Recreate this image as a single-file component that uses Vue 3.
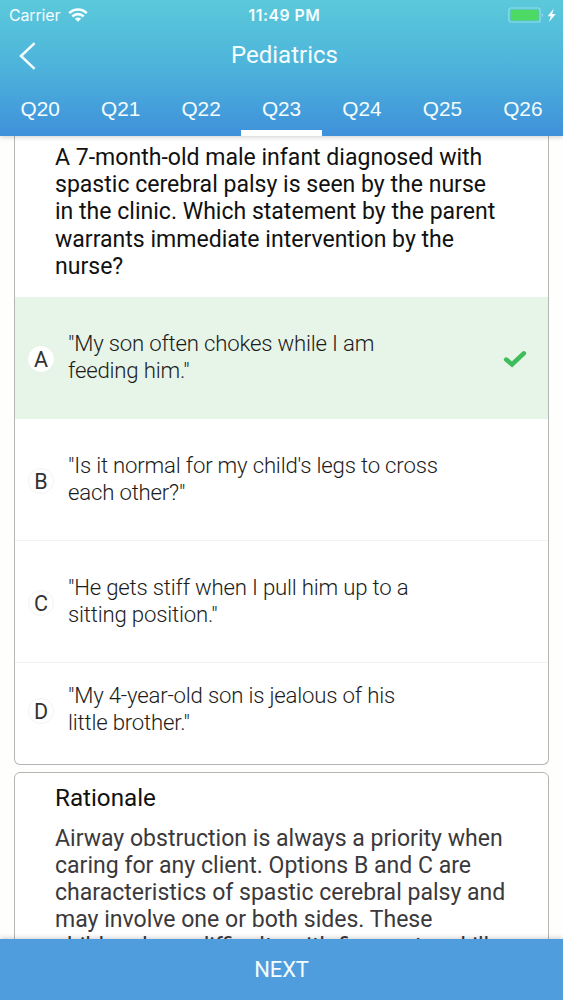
<script setup>
const tabs = ['Q20', 'Q21', 'Q22', 'Q23', 'Q24', 'Q25', 'Q26']
const active = 'Q23'
const question = [
  'A 7-month-old male infant diagnosed with',
  'spastic cerebral palsy is seen by the nurse',
  'in the clinic. Which statement by the parent',
  'warrants immediate intervention by the',
  'nurse?',
]
const answers = [
  { key: 'A', lines: ['"My son often chokes while I am', 'feeding him."'], correct: true },
  { key: 'B', lines: ['"Is it normal for my child\'s legs to cross', 'each other?"'] },
  { key: 'C', lines: ['"He gets stiff when I pull him up to a', 'sitting position."'] },
  { key: 'D', lines: ['"My 4-year-old son is jealous of his', 'little brother."'] },
]
const rationale = [
  'Airway obstruction is always a priority when',
  'caring for any client. Options B and C are',
  'characteristics of spastic cerebral palsy and',
  'may involve one or both sides. These',
  'children have difficulty with fine motor skills',
]
</script>

<template>
  <div class="screen">
    <header class="header">
      <div class="status">
        <div class="carrier">
          <span>Carrier</span>
          <svg class="wifi" viewBox="0 0 20 14" width="20" height="14">
            <path d="M1.2 5.2C6.2.2 13.8.2 18.8 5.2" />
            <path d="M4.3 8.5c3.3-3.2 8.1-3.2 11.4 0" />
            <path class="dot" d="M6.8 10.7c1.8-1.6 4.6-1.6 6.4 0L10 13.8z" />
          </svg>
        </div>
        <span class="clock">11:49 PM</span>
        <div class="power">
          <svg viewBox="0 0 50 18" width="50" height="18">
            <rect x="1.9" y="2" width="31.2" height="14" rx="2" class="shell" />
            <rect x="3.6" y="3.8" width="28" height="10.6" rx="1" class="charge" />
            <path d="M34.8 6.8c1.6.8 1.6 3.6 0 4.4z" class="tip" />
            <path d="M46.8 2.6l-6.2 7.6h3.2l-1.8 5.8 6.8-8h-3.6z" class="bolt" />
          </svg>
        </div>
      </div>
      <div class="titlebar">
        <svg class="back" viewBox="0 0 20 30" width="20" height="30"><path d="M16.6 2.2L3 15l13.6 12.8" /></svg>
        <h1>Pediatrics</h1>
      </div>
      <nav class="tabs">
        <span v-for="t in tabs" :key="t" class="tab" :class="{ active: t === active }">{{ t }}</span>
      </nav>
    </header>

    <main class="content">
      <section class="card quiz">
        <p class="question"><span v-for="l in question" :key="l" class="line">{{ l }}</span></p>
        <div v-for="a in answers" :key="a.key" class="answer" :class="{ correct: a.correct }">
          <span class="letter">{{ a.key }}</span>
          <p><span v-for="l in a.lines" :key="l" class="line">{{ l }}</span></p>
          <svg v-if="a.correct" class="check" viewBox="0 0 24 18" width="24" height="18"><path d="M3.2 9.6l5.8 4.8L20.8 3.4" /></svg>
        </div>
      </section>
      <section class="card rationale">
        <h2>Rationale</h2>
        <p><span v-for="l in rationale" :key="l" class="line">{{ l }}</span></p>
      </section>
    </main>

    <footer class="next">NEXT</footer>
  </div>
</template>

<style>
body { margin: 0; }
</style>

<style scoped>
.screen { width: 563px; height: 1000px; display: flex; flex-direction: column; overflow: hidden; background: #fefefd; font-family: Roboto, "Liberation Sans", sans-serif; }
h1, h2, p { margin: 0; font-weight: 400; }
.header { position: relative; z-index: 1; height: 136px; flex: none; color: #f5fdff; background: linear-gradient(#5bc9da, #4db3db 50%, #3f91da); box-shadow: 0 1px 5px rgba(0, 0, 0, .2); display: flex; flex-direction: column; }
.status { height: 29px; box-sizing: border-box; padding-top: 1px; display: grid; grid-template-columns: 1fr auto 1fr; align-items: center; font-family: Inter, sans-serif; font-size: 16px; }
.carrier { display: flex; align-items: center; gap: 8px; padding-left: 9px; letter-spacing: -.15px; }
.wifi { fill: none; stroke: #f5fdff; stroke-width: 2.6; }
.wifi .dot { fill: #f5fdff; stroke: none; }
.clock { font-weight: 600; font-size: 15.8px; letter-spacing: .5px; padding: 0 0 0 6px; }
.power { display: flex; justify-content: flex-end; padding-right: 6px; }
.shell { fill: none; stroke: #8fddec; stroke-width: 1.2; }
.charge { fill: #4cd964; }
.tip { fill: #8fddec; }
.bolt { fill: #f5fdff; }
.titlebar { height: 54px; display: grid; grid-template-columns: 1fr auto 1fr; align-items: center; }
.back { margin-left: 18px; fill: none; stroke: #f5fdff; stroke-width: 2.5; }
h1 { font-size: 24px; line-height: 30px; padding-left: 6px; margin-top: -3px; }
.tabs { flex: 1; display: flex; }
.tab { flex: 0 0 80.45px; height: 53px; box-sizing: border-box; border-bottom: 6px solid transparent; padding-top: 5px; text-align: center; font: 20.8px/42px "Liberation Sans", sans-serif; }
.active { border-color: #fff; }
.content { flex: 1; min-height: 0; overflow: hidden; padding: 0 14px; }
.card { border: 1px solid #b6b6b6; box-sizing: border-box; background: #fff; }
.line { display: block; white-space: nowrap; }
.quiz { height: 629px; border-top: 0; border-radius: 0 0 6px 6px; overflow: hidden; }
.question { height: 161px; box-sizing: border-box; padding: 8px 0 0 40px; font-size: 23.05px; line-height: 27.2px; color: #111; }
.answer { height: 122px; box-sizing: border-box; display: flex; align-items: center; padding: 0 21px 0 13px; border-bottom: 1px solid #f3f3f3; font-family: "Roboto Light", Roboto, "Liberation Sans", sans-serif; font-size: 22.2px; font-weight: 300; line-height: 27px; color: #1c1c1c; }
.answer:last-child { height: 101px; border: 0; padding-bottom: 8px; }
.answer p { flex: 1; margin: -1px 0 0 14px; letter-spacing: -.2px; }
.answer.correct { background: #e7f4e8; border-color: #e7f4e8; }
.letter { width: 26px; height: 26px; margin-top: 2px; box-sizing: border-box; border: 1px solid #f3f3f3; border-radius: 50%; background: #fff; text-align: center; font-family: Roboto, sans-serif; font-size: 21.5px; font-weight: 400; line-height: 25px; color: #333; }
.correct .letter { border-color: #fff; }
.check { margin-top: 2px; fill: none; stroke: #3fbd5c; stroke-width: 4.6; stroke-linecap: round; }
.rationale { height: 300px; margin-top: 7px; border-radius: 6px; padding: 12px 0 0 40px; color: #3b393c; font-size: 23.05px; line-height: 27.1px; }
h2 { font-size: 24.2px; color: #111; margin-bottom: 13px; }
.next { position: relative; height: 61px; flex: none; background: #509ddd; color: #f5fdff; text-align: center; font-size: 22px; line-height: 61px; letter-spacing: -.2px; box-shadow: 0 -1px 5px rgba(0, 0, 0, .2); }
</style>
